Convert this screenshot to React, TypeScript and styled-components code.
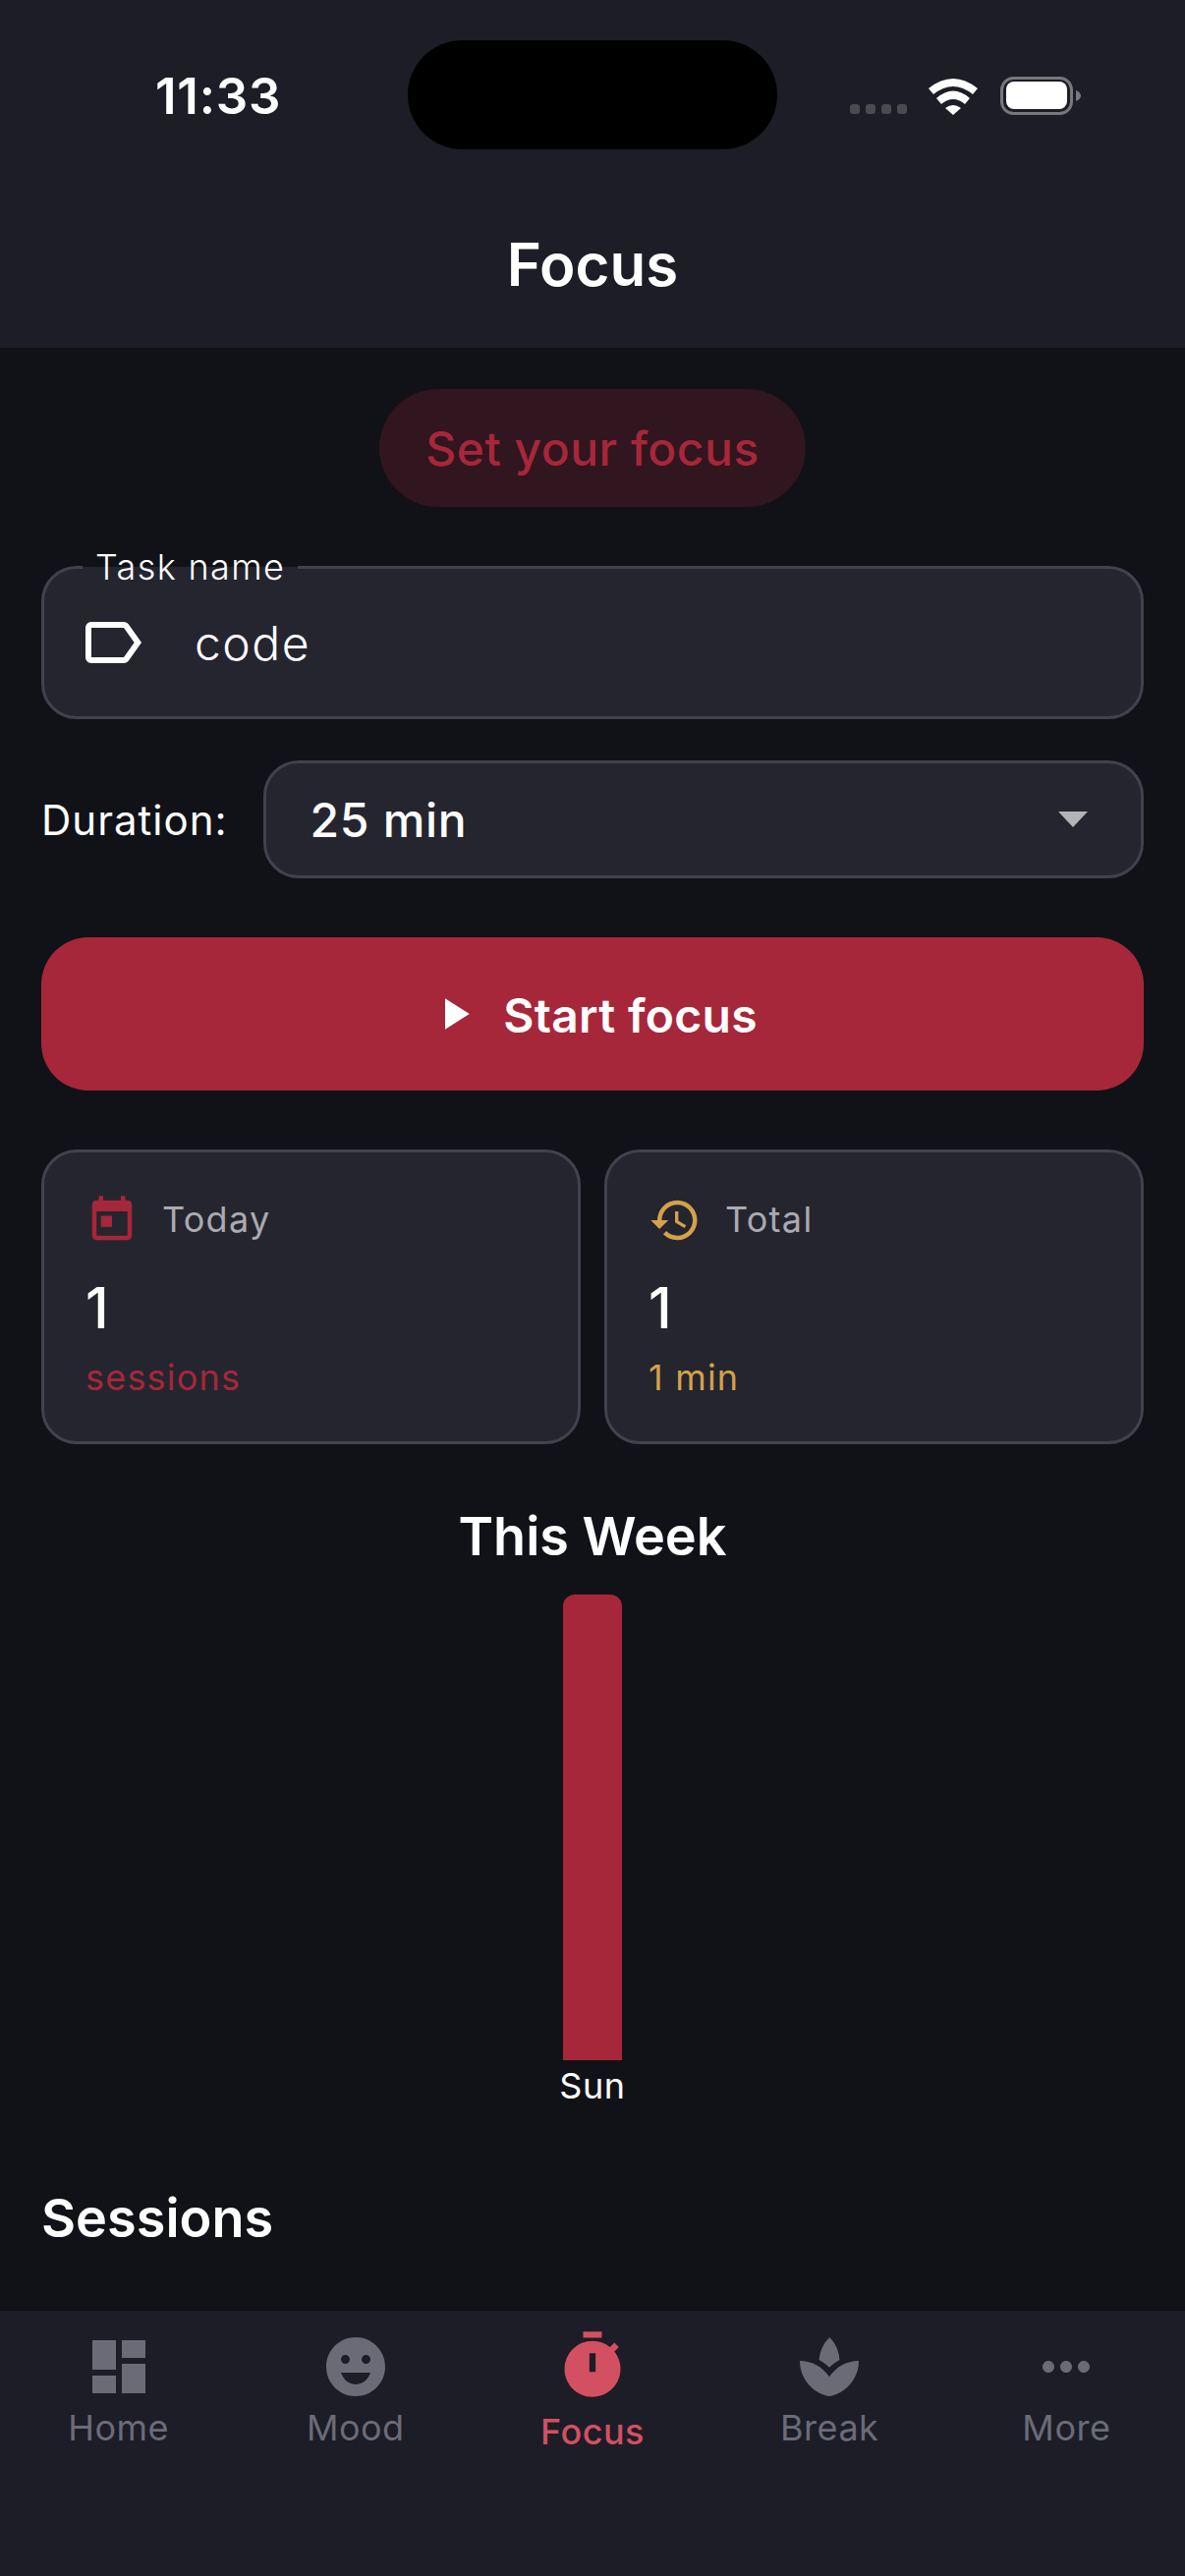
import React from "react";
import styled, { createGlobalStyle } from "styled-components";
import {
  MdDashboard,
  MdEmojiEmotions,
  MdTimer,
  MdSpa,
  MdMoreHoriz,
  MdToday,
  MdHistory,
  MdLabelOutline,
  MdPlayArrow,
} from "react-icons/md";

const RED = "#a6273a";
const GOLD = "#d4a24c";
const PAGE = "#111217";
const SURFACE = "#25252f";
const OUTLINE = "#42424c";

const GlobalStyle = createGlobalStyle`
  html, body {
    margin: 0;
    padding: 0;
    background: ${PAGE};
  }
  body {
    font-family: "Inter", "Liberation Sans", sans-serif;
    color: #ffffff;
  }
  * {
    box-sizing: border-box;
  }
`;

const NAV_ITEMS = [
  { label: "Home", icon: MdDashboard },
  { label: "Mood", icon: MdEmojiEmotions },
  { label: "Focus", icon: MdTimer, active: true },
  { label: "Break", icon: MdSpa },
  { label: "More", icon: MdMoreHoriz },
];

export default function App() {
  return (
    <Screen>
      <GlobalStyle />
      <Header>
        <StatusBar>
          <Time>11:33</Time>
          <Island />
          <StatusIcons>
            <SignalDots>
              <i />
              <i />
              <i />
              <i />
            </SignalDots>
            <svg width="50" height="38" viewBox="0 0 50 38" fill="#fff">
              <path d="M0 11Q25 -9 50 11L45 17Q25 1 5 17Z" />
              <path d="M8 21Q25 6 42 21L37 27Q25 17 13 27Z" />
              <path d="M17 31Q25 25 33 31L25 38Z" />
            </svg>
            <svg width="82" height="39" viewBox="0 0 82 39">
              <rect x="1.5" y="1.5" width="71" height="36" rx="12" fill="none" stroke="#77777c" strokeWidth="3" />
              <rect x="6" y="5" width="62" height="28" rx="8" fill="#fff" />
              <path d="M77 14C80 15 82 17 82 19.5C82 22 80 24 77 25Z" fill="#77777c" />
            </svg>
          </StatusIcons>
        </StatusBar>
        <Title>Focus</Title>
      </Header>

      <Main>
        <PillRow>
          <Pill>Set your focus</Pill>
        </PillRow>

        <TaskField>
          <FloatingLabel>Task name</FloatingLabel>
          <MdLabelOutline size={72} color="#ffffff" />
          <TaskValue>code</TaskValue>
        </TaskField>

        <DurationRow>
          <DurationLabel>Duration:</DurationLabel>
          <Select>
            <SelectValue>25 min</SelectValue>
            <Caret />
          </Select>
        </DurationRow>

        <StartButton>
          <MdPlayArrow size={54} color="#ffffff" />
          <span>Start focus</span>
        </StartButton>

        <Cards>
          <Card>
            <CardHead>
              <MdToday size={54} color={RED} />
              <CardLabel>Today</CardLabel>
            </CardHead>
            <CardValue>1</CardValue>
            <CardSub $color={RED}>sessions</CardSub>
          </Card>
          <Card>
            <CardHead>
              <MdHistory size={54} color={GOLD} />
              <CardLabel>Total</CardLabel>
            </CardHead>
            <CardValue>1</CardValue>
            <CardSub $color={GOLD}>1 min</CardSub>
          </Card>
        </Cards>

        <WeekTitle>This Week</WeekTitle>
        <Chart>
          <Bar />
          <BarLabel>Sun</BarLabel>
        </Chart>

        <SectionTitle>Sessions</SectionTitle>
      </Main>

      <Nav>
        {NAV_ITEMS.map(({ label, icon: Icon, active }) => (
          <NavItem key={label} $active={!!active}>
            <Icon size={active ? 76 : 72} />
            <NavLabel $active={!!active}>{label}</NavLabel>
          </NavItem>
        ))}
      </Nav>
    </Screen>
  );
}

const Screen = styled.div`
  width: 1206px;
  height: 2622px;
  display: flex;
  flex-direction: column;
  background: ${PAGE};
  overflow: hidden;
`;

const Header = styled.header`
  height: 354px;
  flex: none;
  background: #1c1d26;
  display: flex;
  flex-direction: column;
`;

const StatusBar = styled.div`
  display: grid;
  grid-template-columns: 415px 376px 1fr;
  padding-top: 41px;
  height: 151px;
  align-items: start;
`;

const Time = styled.div`
  padding: 26px 0 0 158px;
  font-size: 51px;
  line-height: 62px;
  font-weight: 600;
  letter-spacing: 0.8px;
`;

const Island = styled.div`
  height: 111px;
  background: #000000;
  border-radius: 56px;
`;

const StatusIcons = styled.div`
  display: flex;
  align-items: flex-end;
  padding: 37px 0 0 74px;
  gap: 22px;
  svg:last-child {
    margin-left: 1px;
  }
`;

const SignalDots = styled.div`
  display: flex;
  gap: 6px;
  margin-bottom: 1px;
  i {
    width: 10px;
    height: 10px;
    border-radius: 3px;
    background: #4a4a50;
  }
`;

const Title = styled.h1`
  margin: 82px 0 0;
  text-align: center;
  font-size: 60px;
  line-height: 72px;
  font-weight: 600;
`;

const Main = styled.main`
  flex: 1;
  padding: 42px 42px 0;
  display: flex;
  flex-direction: column;
`;

const PillRow = styled.div`
  display: flex;
  justify-content: center;
`;

const Pill = styled.div`
  height: 120px;
  padding: 0 47px;
  display: flex;
  align-items: center;
  border-radius: 60px;
  background: #31151f;
  color: ${RED};
  font-size: 48px;
  font-weight: 500;
  letter-spacing: 0.5px;
`;

const TaskField = styled.div`
  position: relative;
  height: 156px;
  margin-top: 60px;
  padding: 0 42px 0 33px;
  display: flex;
  align-items: center;
  gap: 48px;
  background: ${SURFACE};
  border: 3px solid ${OUTLINE};
  border-radius: 36px;
`;

const FloatingLabel = styled.span`
  position: absolute;
  left: 39px;
  top: -24px;
  padding: 0 13px;
  font-size: 36px;
  font-weight: 350;
  line-height: 44px;
  letter-spacing: 1.35px;
  background: linear-gradient(${PAGE} 50%, ${SURFACE} 50%);
`;

const TaskValue = styled.span`
  font-size: 48px;
  font-weight: 350;
  letter-spacing: 1.5px;
`;

const DurationRow = styled.div`
  display: flex;
  align-items: center;
  gap: 36px;
  margin-top: 42px;
`;

const DurationLabel = styled.span`
  font-size: 42px;
  letter-spacing: 1px;
`;

const Select = styled.div`
  flex: 1;
  height: 120px;
  display: flex;
  align-items: center;
  justify-content: space-between;
  padding: 0 54px 0 45px;
  background: ${SURFACE};
  border: 3px solid ${OUTLINE};
  border-radius: 36px;
`;

const SelectValue = styled.span`
  font-size: 48px;
  font-weight: 500;
  letter-spacing: 0.7px;
`;

const Caret = styled.span`
  width: 0;
  height: 0;
  border-left: 15px solid transparent;
  border-right: 15px solid transparent;
  border-top: 16px solid #b3b3b8;
`;

const StartButton = styled.button`
  height: 156px;
  margin-top: 60px;
  padding: 3px 0 0;
  border: 0;
  border-radius: 48px;
  background: ${RED};
  color: #ffffff;
  display: flex;
  align-items: center;
  justify-content: center;
  gap: 23px;
  font-family: inherit;
  font-size: 48px;
  font-weight: 600;
  letter-spacing: 0.3px;
  svg {
    margin-top: -3px;
  }
`;

const Cards = styled.div`
  display: grid;
  grid-template-columns: 1fr 1fr;
  gap: 24px;
  margin-top: 60px;
`;

const Card = styled.div`
  height: 300px;
  padding: 42px;
  display: flex;
  flex-direction: column;
  background: ${SURFACE};
  border: 3px solid ${OUTLINE};
  border-radius: 36px;
`;

const CardHead = styled.div`
  display: flex;
  align-items: center;
  gap: 24px;
`;

const CardLabel = styled.span`
  margin-top: -2px;
  font-size: 36px;
  letter-spacing: 1.3px;
  color: #aaaab0;
`;

const CardValue = styled.div`
  margin-top: 27px;
  font-size: 57px;
  line-height: 72px;
  font-weight: 500;
`;

const CardSub = styled.div<{ $color: string }>`
  margin-top: 12px;
  font-size: 36px;
  line-height: 44px;
  letter-spacing: 1.2px;
  color: ${(props) => props.$color};
`;

const WeekTitle = styled.h2`
  margin: 58px 0 0;
  text-align: center;
  font-size: 54px;
  line-height: 72px;
  font-weight: 600;
`;

const Chart = styled.div`
  margin-top: 23px;
  display: flex;
  flex-direction: column;
  align-items: center;
`;

const Bar = styled.div`
  width: 60px;
  height: 474px;
  background: ${RED};
  border-radius: 12px 12px 0 0;
`;

const BarLabel = styled.span`
  margin-top: 4px;
  font-size: 36px;
  line-height: 44px;
  letter-spacing: 0.6px;
`;

const SectionTitle = styled.h2`
  margin: 77px 0 0;
  font-size: 54px;
  line-height: 72px;
  font-weight: 600;
`;

const Nav = styled.nav`
  height: 270px;
  flex: none;
  display: grid;
  grid-template-columns: repeat(5, 1fr);
  background: #1c1d26;
`;

const NavItem = styled.div<{ $active: boolean }>`
  display: flex;
  flex-direction: column;
  align-items: center;
  padding-top: ${(props) => (props.$active ? "18px" : "21px")};
  color: ${(props) => (props.$active ? "#d25062" : "#6b6b78")};
`;

const NavLabel = styled.span<{ $active: boolean }>`
  margin-top: ${(props) => (props.$active ? "7px" : "4px")};
  font-size: 36px;
  line-height: 44px;
  font-weight: ${(props) => (props.$active ? 500 : 400)};
  letter-spacing: 0.5px;
`;
